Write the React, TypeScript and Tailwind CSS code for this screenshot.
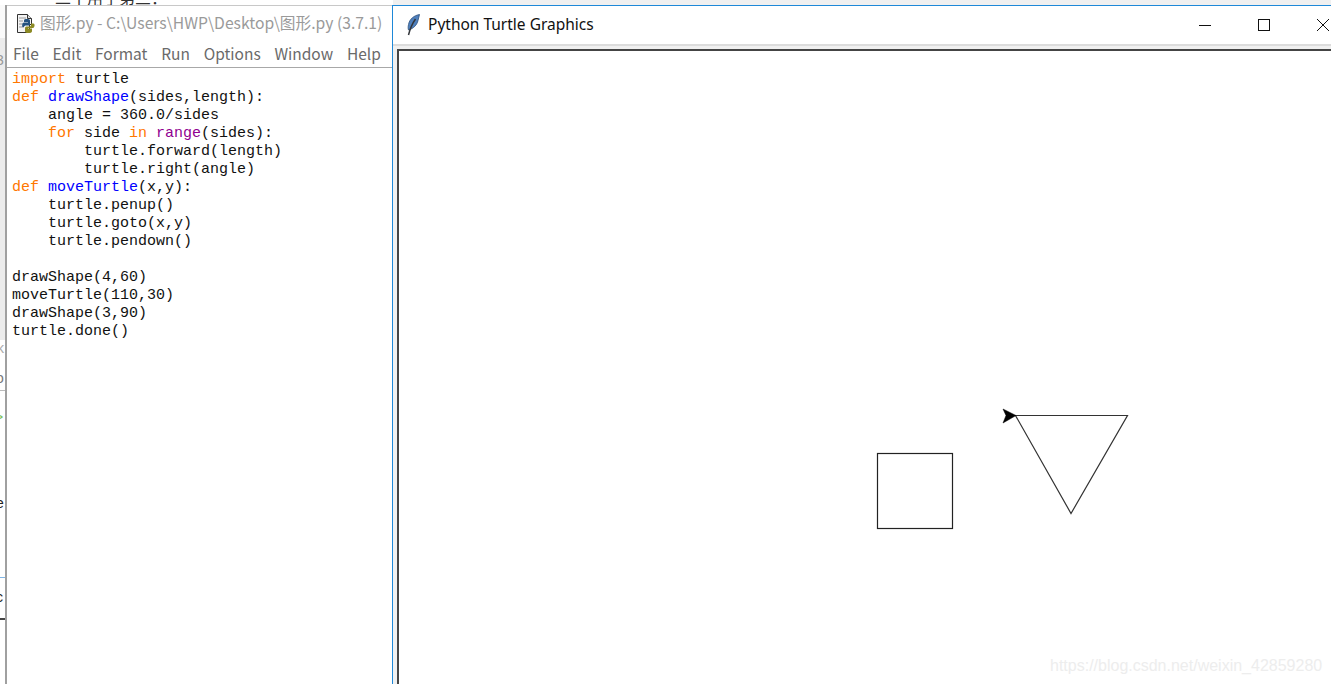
import React from 'react'

const kw = "text-[#ff7700]"
const fn = "text-[#0000ff]"
const bi = "text-[#900090]"

const menus = ["File", "Edit", "Format", "Run", "Options", "Window", "Help"]

function PyIcon() {
  return (
    <svg width="20" height="21" viewBox="0 0 20 21" className="shrink-0">
      <path d="M1.500 1.500h10l4 4v6h-2v8h-12z" fill="#f4f4f4" stroke="#333" strokeWidth="1" />
      <path d="M11.500 1.500v4h4" fill="#ddd" stroke="#333" strokeWidth="1" />
      <path d="M3 5h7M3 8h4M3 11h4M3 14h5" stroke="#9a9a9a" strokeWidth="1" />
      <path d="M8 9V7.500C8 6 9 6 11 6s3 .5 3 1.500V11c0 1-1 1.500-2 1.500H10c-1 0-2 .5-2 1.500H6.500C6 13 6 9.500 8 9.500h4V9z" fill="#24527f" />
      <path d="M15 10.500h2.500c1.500 0 1.500 4-.5 4.500H12v.5h4V18c0 1.500-1 2-3.500 2S9 19.500 9 18v-3c0-1 1-1.500 2-1.500h2c1 0 2-.5 2-1.500z" fill="#8c8a24" />
    </svg>
  )
}

function Feather() {
  return (
    <svg width="16" height="22" viewBox="0 0 16 22" className="shrink-0">
      <path d="M14.500 .5C9 1.500 4.500 5 3.500 10.500c-.5 2.500-.5 4 0 5.500 5-1.500 8.500-5 9.500-9.500.5-2 1-4 1.500-6z" fill="#4f80bd" stroke="#2c4f7c" strokeWidth="0.8" />
      <path d="M10.500 5C8 8.500 5.500 13 3.500 21" stroke="#33363b" strokeWidth="1.500" fill="none" />
    </svg>
  )
}

export default function App() {
  return (
    <div className="h-[684px] w-[1331px] overflow-hidden bg-white flex flex-col font-['Noto_Sans_CJK_SC','Noto_Sans',sans-serif]">
      {/* bit of the desktop showing above the windows */}
      <div className="h-[5px] shrink-0 flex">
        <div className="w-[393px] bg-white overflow-hidden">
          <div className="ml-[55px] -mt-[11px] text-[16px] leading-[16px] text-[#333] whitespace-nowrap">二十用于第三：</div>
        </div>
        <div className="flex-1 bg-[#f0f0f0]"></div>
      </div>

      <div className="flex-1 flex min-h-0">
        {/* sliver of the window behind */}
        <div className="w-[7px] shrink-0 flex flex-col bg-white border-r-2 border-[#a0a0a0] overflow-hidden text-[14px] leading-[16px] text-[#333] font-['Liberation_Sans',sans-serif]">
          <div className="h-[33px] shrink-0 bg-[#fafafa]"></div>
          <div className="h-[302px] shrink-0 bg-[#ececec] text-[#999] -ml-[4px]">
            <div className="mt-[14px]">3</div>
          </div>
          <div className="h-[30px] shrink-0 -ml-[3px] text-[#aaa]">
            <div>k</div>
          </div>
          <div className="h-[21px] shrink-0 -ml-[4px] text-[#777] border-b border-[#bbb]">o</div>
          <div className="h-[104px] shrink-0 -ml-[5px] text-[#7bbf5a] pt-[18px]">&gt;</div>
          <div className="h-[82px] shrink-0 -ml-[4px] text-[#222]">e</div>
          <div className="h-[1px] shrink-0 bg-[#7fb6e6]"></div>
          <div className="h-[20px] shrink-0 -ml-[4px] mt-[11px] text-[#222]">c</div>
          <div className="h-[2px] shrink-0 mt-[9px] bg-[#444]"></div>
        </div>

        {/* IDLE editor */}
        <div className="w-[385px] shrink-0 flex flex-col border-t border-[#c8c8c8] bg-white">
          <div className="h-[34px] shrink-0 flex items-center pl-[9px] gap-[4px] text-[15.700px] text-[#9a9a9a] whitespace-nowrap">
            <PyIcon />
            <span>图形.py - C:\Users\HWP\Desktop\图形.py (3.7.1)</span>
          </div>
          <div className="h-[28px] shrink-0 flex items-center pl-[6px] gap-[13.750px] text-[15.500px] text-[#6a6a6a] border-b border-[#a8a8a8]">
            {menus.map((m) => (
              <span key={m}>{m}</span>
            ))}
          </div>
          <pre className="flex-1 pl-[5px] pt-[3px] text-[15px] leading-[18px] text-[#111] font-['Liberation_Mono',monospace]">
            <div><span className={kw}>import</span> turtle</div>
            <div><span className={kw}>def</span> <span className={fn}>drawShape</span>(sides,length):</div>
            <div>    angle = 360.0/sides</div>
            <div>    <span className={kw}>for</span> side <span className={kw}>in</span> <span className={bi}>range</span>(sides):</div>
            <div>        turtle.forward(length)</div>
            <div>        turtle.right(angle)</div>
            <div><span className={kw}>def</span> <span className={fn}>moveTurtle</span>(x,y):</div>
            <div>    turtle.penup()</div>
            <div>    turtle.goto(x,y)</div>
            <div>    turtle.pendown()</div>
            <div>&nbsp;</div>
            <div>drawShape(4,60)</div>
            <div>moveTurtle(110,30)</div>
            <div>drawShape(3,90)</div>
            <div>turtle.done()</div>
          </pre>
        </div>

        {/* turtle graphics window */}
        <div className="flex-1 flex flex-col border-l border-t border-[#1e88d8] bg-white min-w-0">
          <div className="h-[38px] shrink-0 flex items-center pl-[12px] pr-[1px] pb-[1px] text-[15.500px] text-[#111]">
            <Feather />
            <span className="ml-[7px] font-['Noto_Sans','Open_Sans',sans-serif]">Python Turtle Graphics</span>
            <div className="ml-auto flex items-center">
              <svg width="14" height="14" viewBox="0 0 14 14" className="mr-[45px]"><path d="M1 7.500h12" stroke="#111" strokeWidth="1" /></svg>
              <svg width="14" height="14" viewBox="0 0 14 14" className="mr-[45px]"><rect x="1.500" y="1.500" width="11" height="11" fill="none" stroke="#111" strokeWidth="1" /></svg>
              <svg width="14" height="14" viewBox="0 0 14 14"><path d="M1 1l12 12M1 13L13 1" stroke="#111" strokeWidth="1" fill="none" /></svg>
            </div>
          </div>
          <div className="h-[5px] shrink-0 bg-[#f0f0f0] border-t-2 border-[#dcdcdc]"></div>
          <div className="flex-1 flex min-h-0 pl-[4px] bg-[#f0f0f0]">
            <div className="flex-1 bg-white border-l-2 border-t-2 border-[#444] min-w-0 overflow-hidden">
              <svg width="933" height="633" viewBox="399 51 933 633" className="block">
                <rect x="877.500" y="453.500" width="75" height="75" fill="none" stroke="#222" strokeWidth="1.200" />
                <path d="M1015.500 415.500H1127.500L1071 513.500Z" fill="none" stroke="#333" strokeWidth="1.200" />
                <path d="M1003 409L1016 415.500L1003 423L1006 415.500Z" fill="#000" stroke="#000" strokeWidth="0.500" />
                <text x="1050" y="671" fontFamily="Liberation Sans, sans-serif" fontSize="16" fill="#ededed">https://blog.csdn.net/weixin_42859280</text>
              </svg>
            </div>
          </div>
        </div>
      </div>
    </div>
  )
}
